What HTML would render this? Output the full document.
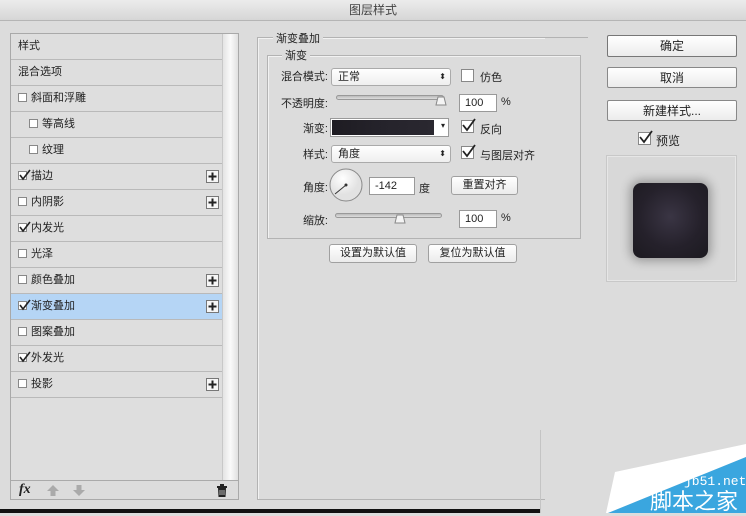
<!DOCTYPE html>
<html><head><meta charset="utf-8"><style>
*{box-sizing:border-box;margin:0;padding:0}
body{width:746px;height:513px;background:#dcdcdc;font-family:"Liberation Sans","Noto Sans CJK SC",sans-serif;font-size:11px;color:#222;position:relative;overflow:hidden}
.abs{position:absolute}
.title{left:0;top:0;width:746px;height:21px;background:linear-gradient(#ececec,#d6d6d6);border-bottom:1px solid #b5b5b5;text-align:center;line-height:21px;font-size:12px;color:#444}
.panel{left:10px;top:33px;width:229px;height:467px;border:1px solid #a9a9a9;background:#dedede}
.row{position:absolute;left:0;width:211px;height:26px;border-bottom:1px solid #b9b9b9;line-height:25px;padding-left:7px;font-size:11px}
.row.sel{background:#b5d5f5}
.cb{display:inline-block;width:9px;height:9px;border:1px solid #888;background:#fff;vertical-align:-1px;margin-right:4px;position:relative}
.abs.cb{position:absolute;margin:0}
.cb svg{position:absolute}
.plus{position:absolute;right:3px;top:6px;width:13px;height:13px;border:1px solid #777;background:#f6f6f6}
.plus svg{display:block}
.scroll{left:211px;top:0;width:16px;height:446px;background:linear-gradient(90deg,#e4e4e4,#fafafa,#e0e0e0);border-left:1px solid #c8c8c8}
.bbar{left:0;top:446px;width:227px;height:19px;border-top:1px solid #aaa;background:#dcdcdc}
.grp{border:1px solid #b3b3b3;box-shadow:inset 1px 1px 0 #f2f2f2}
.lbl{background:#dcdcdc;padding:0 3px;font-size:11px}
.sel2{height:18px;border:1px solid #aaa;border-radius:3px;background:linear-gradient(#fff,#efefef);padding-left:6px;line-height:16px}
.inp{height:18px;border:1px solid #999;background:#fff;padding-left:5px;line-height:16px;font-size:11px}
.btn{border:1px solid #a0a0a0;border-radius:3px;background:linear-gradient(#fff,#ebebeb);text-align:center;font-size:11px}
.rb{border:1px solid #888;border-radius:2px;background:linear-gradient(#fff,#ececec);text-align:center;font-size:12px;line-height:20px}
.track{height:5px;border:1px solid #999;border-radius:3px;background:linear-gradient(#bbb,#ddd)}
.r{text-align:right}
</style></head><body>
<div class="abs title">图层样式</div>

<div class="abs panel">
 <div class="row" style="top:0">样式</div>
 <div class="row" style="top:26px">混合选项</div>
 <div class="row" style="top:52px"><span class="cb"></span>斜面和浮雕</div>
 <div class="row" style="top:78px;padding-left:18px"><span class="cb"></span>等高线</div>
 <div class="row" style="top:104px;padding-left:18px"><span class="cb"></span>纹理</div>
 <div class="row" style="top:130px"><span class="cb"><svg width="12" height="12" style="left:0;top:-3px"><path d="M1 6 L4 10 L11 1" stroke="#222" stroke-width="1.6" fill="none"/></svg></span>描边<span class="plus"><svg width="11" height="11"><path d="M5.5 1.5V9.5M1.5 5.5H9.5" stroke="#222" stroke-width="2"/></svg></span></div>
 <div class="row" style="top:156px"><span class="cb"></span>内阴影<span class="plus"><svg width="11" height="11"><path d="M5.5 1.5V9.5M1.5 5.5H9.5" stroke="#222" stroke-width="2"/></svg></span></div>
 <div class="row" style="top:182px"><span class="cb"><svg width="12" height="12" style="left:0;top:-3px"><path d="M1 6 L4 10 L11 1" stroke="#222" stroke-width="1.6" fill="none"/></svg></span>内发光</div>
 <div class="row" style="top:208px"><span class="cb"></span>光泽</div>
 <div class="row" style="top:234px"><span class="cb"></span>颜色叠加<span class="plus"><svg width="11" height="11"><path d="M5.5 1.5V9.5M1.5 5.5H9.5" stroke="#222" stroke-width="2"/></svg></span></div>
 <div class="row sel" style="top:260px"><span class="cb"><svg width="12" height="12" style="left:0;top:-3px"><path d="M1 6 L4 10 L11 1" stroke="#222" stroke-width="1.6" fill="none"/></svg></span>渐变叠加<span class="plus"><svg width="11" height="11"><path d="M5.5 1.5V9.5M1.5 5.5H9.5" stroke="#222" stroke-width="2"/></svg></span></div>
 <div class="row" style="top:286px"><span class="cb"></span>图案叠加</div>
 <div class="row" style="top:312px"><span class="cb"><svg width="12" height="12" style="left:0;top:-3px"><path d="M1 6 L4 10 L11 1" stroke="#222" stroke-width="1.6" fill="none"/></svg></span>外发光</div>
 <div class="row" style="top:338px"><span class="cb"></span>投影<span class="plus"><svg width="11" height="11"><path d="M5.5 1.5V9.5M1.5 5.5H9.5" stroke="#222" stroke-width="2"/></svg></span></div>
 <div class="abs scroll"></div>
 <div class="abs bbar">
  <span class="abs" style="left:8px;top:1px;font-style:italic;font-family:'Liberation Serif',serif;font-size:14px;font-weight:bold">fx</span>
  <svg class="abs" style="left:36px;top:4px" width="12" height="11"><path d="M6 0L12 6H8.5V11H3.5V6H0Z" fill="#aaa"/></svg>
  <svg class="abs" style="left:62px;top:4px" width="12" height="11"><path d="M6 11L12 5H8.5V0H3.5V5H0Z" fill="#aaa"/></svg>
  <svg class="abs" style="left:205px;top:3px" width="12" height="13"><path d="M1 2H11V4H1Z M4 0H8V2H4Z M2 4H10L9.5 13H2.5Z" fill="#222"/><path d="M4 6V11M6 6V11M8 6V11" stroke="#ddd" stroke-width="0.8"/></svg>
 </div>
</div>

<div class="abs grp" style="left:257px;top:37px;width:288px;height:463px;border-right:none"></div>
<div class="abs" style="left:257px;top:37px;width:331px;height:1px;background:#b3b3b3"></div>
<div class="abs lbl" style="left:273px;top:30px">渐变叠加</div>
<div class="abs grp" style="left:267px;top:55px;width:314px;height:184px"></div>
<div class="abs lbl" style="left:282px;top:47px">渐变</div>

<div class="abs r" style="left:246px;top:68px;width:82px">混合模式:</div>
<div class="abs sel2" style="left:331px;top:68px;width:120px">正常<span class="abs" style="right:4px;top:0;font-size:8px">⬍</span></div>
<div class="abs cb" style="left:461px;top:69px;width:13px;height:13px"></div>
<div class="abs" style="left:480px;top:69px">仿色</div>

<div class="abs r" style="left:246px;top:95px;width:82px">不透明度:</div>
<div class="abs track" style="left:336px;top:95px;width:108px"></div>
<svg class="abs" style="left:435px;top:96px" width="12" height="10"><path d="M3 1H9L11 9H1Z" fill="#f4f4f4" stroke="#888"/></svg>
<div class="abs inp" style="left:459px;top:94px;width:38px">100</div>
<div class="abs" style="left:501px;top:96px">%</div>

<div class="abs r" style="left:246px;top:120px;width:82px">渐变:</div>
<div class="abs" style="left:330px;top:118px;width:119px;height:19px;border:1px solid #999;background:#fff">
 <div class="abs" style="left:1px;top:1px;width:102px;height:15px;background:linear-gradient(90deg,#1e1c22,#25232b,#2a2830)"></div>
 <span class="abs" style="right:3px;top:2px;font-size:8px">▾</span></div>
<div class="abs cb" style="left:461px;top:120px;width:13px;height:13px"><svg width="14" height="14" style="left:0;top:-3px"><path d="M1 7 L5 12 L13 1" stroke="#222" stroke-width="1.8" fill="none"/></svg></div>
<div class="abs" style="left:480px;top:121px">反向</div>

<div class="abs r" style="left:246px;top:146px;width:82px">样式:</div>
<div class="abs sel2" style="left:331px;top:145px;width:120px">角度<span class="abs" style="right:4px;top:0;font-size:8px">⬍</span></div>
<div class="abs cb" style="left:461px;top:146px;width:13px;height:13px"><svg width="14" height="14" style="left:0;top:-3px"><path d="M1 7 L5 12 L13 1" stroke="#222" stroke-width="1.8" fill="none"/></svg></div>
<div class="abs" style="left:480px;top:147px">与图层对齐</div>

<div class="abs r" style="left:246px;top:179px;width:82px">角度:</div>
<svg class="abs" style="left:329px;top:168px" width="34" height="34"><defs><radialGradient id="g" cx="40%" cy="30%"><stop offset="0" stop-color="#fff"/><stop offset="1" stop-color="#e2e2e2"/></radialGradient></defs><circle cx="17" cy="17" r="16" fill="url(#g)" stroke="#888"/><path d="M17 17L6 26" stroke="#333" stroke-width="1"/><circle cx="17" cy="17" r="1.5" fill="#333"/></svg>
<div class="abs inp" style="left:369px;top:177px;width:46px">-142</div>
<div class="abs" style="left:419px;top:180px">度</div>
<div class="abs btn" style="left:451px;top:176px;width:67px;height:19px;line-height:17px">重置对齐</div>

<div class="abs r" style="left:246px;top:212px;width:82px">缩放:</div>
<div class="abs track" style="left:335px;top:213px;width:107px"></div>
<svg class="abs" style="left:394px;top:214px" width="12" height="10"><path d="M3 1H9L11 9H1Z" fill="#f4f4f4" stroke="#888"/></svg>
<div class="abs inp" style="left:459px;top:210px;width:38px">100</div>
<div class="abs" style="left:501px;top:212px">%</div>

<div class="abs btn" style="left:329px;top:244px;width:88px;height:19px;line-height:17px">设置为默认值</div>
<div class="abs btn" style="left:428px;top:244px;width:89px;height:19px;line-height:17px">复位为默认值</div>

<div class="abs rb" style="left:607px;top:35px;width:130px;height:22px;border-color:#777">确定</div>
<div class="abs rb" style="left:607px;top:67px;width:130px;height:21px">取消</div>
<div class="abs rb" style="left:607px;top:100px;width:130px;height:21px">新建样式...</div>
<div class="abs cb" style="left:638px;top:132px;width:13px;height:13px"><svg width="14" height="14" style="left:0;top:-3px"><path d="M1 7 L5 12 L13 1" stroke="#222" stroke-width="1.8" fill="none"/></svg></div>
<div class="abs" style="left:656px;top:132px;font-size:12px">预览</div>
<div class="abs" style="left:606px;top:155px;width:131px;height:127px;border:1px solid #c8c8c8;background:#d8d8d8;box-shadow:inset 0 0 0 1px #e6e6e6"></div>
<div class="abs" style="left:633px;top:183px;width:75px;height:75px;border-radius:8px;background:radial-gradient(circle at 50% 45%,#3a3544,#25212b 55%,#1c1a20);box-shadow:0 0 10px 3px rgba(0,0,0,.3)"></div>

<div class="abs" style="left:540px;top:430px;width:1px;height:83px;background:#c4c4c4"></div>
<div class="abs" style="left:0;top:509px;width:540px;height:4px;background:#111"></div>
<svg class="abs" style="left:600px;top:440px" width="146" height="73"><path d="M15 32 L146 4 L146 17 L8 73 L6 73 Z" fill="#fff"/><path d="M146 17 L8 73 L146 73Z" fill="#3aa6df"/></svg>
<div class="abs" style="left:684px;top:474px;color:#fff;font-family:'Liberation Mono',monospace;font-size:13px">jb51.net</div>
<div class="abs" style="left:650px;top:488px;color:#fff;font-size:22px;line-height:24px;font-family:'Noto Sans CJK SC',sans-serif">脚本之家</div>
</body></html>
